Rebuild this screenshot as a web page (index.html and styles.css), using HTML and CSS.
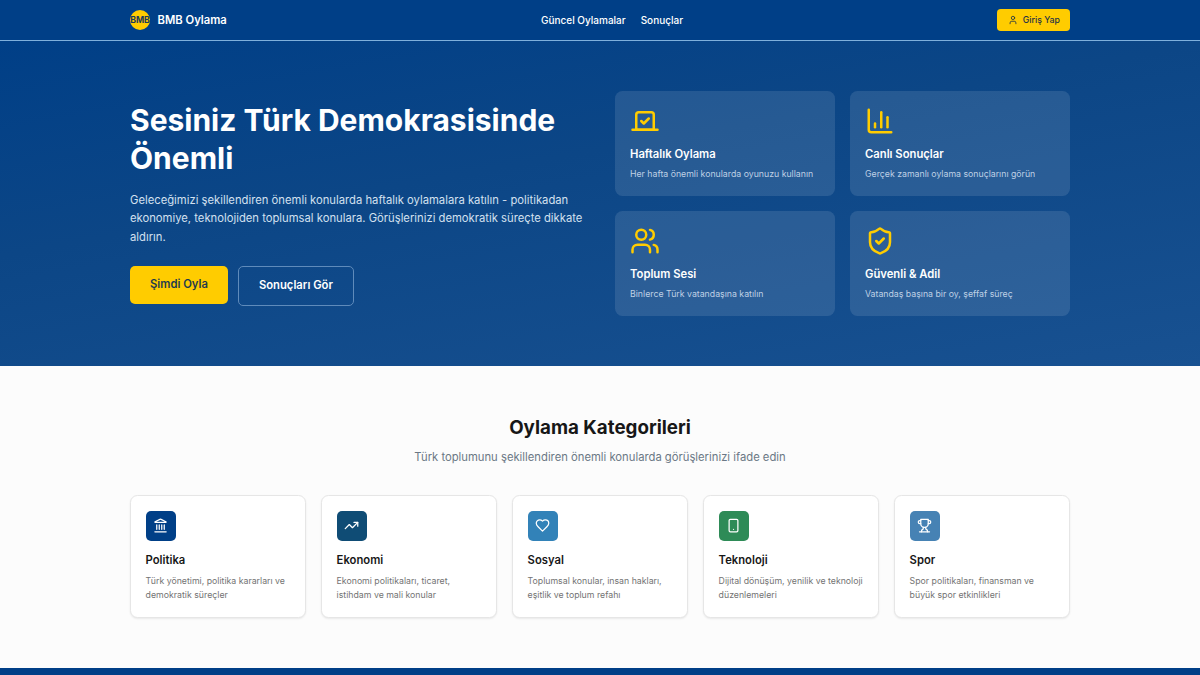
FILE: index.html
```html
<!DOCTYPE html>
<html lang="tr">

<head>
  <meta charset="UTF-8">
  <meta name="viewport" content="width=device-width, initial-scale=1.0">
  <title>BMB Oylama</title>
  <link rel="stylesheet" href="styles.css">
</head>

<body>
  <header class="header">
    <div class="container header-inner">
      <a class="logo" href="#">
        <span class="logo-mark">BMB</span>
        <span class="logo-text">BMB Oylama</span>
      </a>
      <nav class="nav">
        <a href="#">Güncel Oylamalar</a>
        <a href="#">Sonuçlar</a>
      </nav>
      <a class="login" href="#">
        <svg class="icon" viewBox="0 0 24 24">
          <path d="M19 21v-2a4 4 0 0 0-4-4H9a4 4 0 0 0-4 4v2" />
          <circle cx="12" cy="7" r="4" />
        </svg>
        Giriş Yap
      </a>
    </div>
  </header>

  <section class="hero">
    <div class="container hero-grid">
      <div class="hero-content">
        <h1>Sesiniz Türk Demokrasisinde Önemli</h1>
        <p>Geleceğimizi şekillendiren önemli konularda haftalık oylamalara katılın - politikadan ekonomiye, teknolojiden toplumsal konulara. Görüşlerinizi demokratik süreçte dikkate aldırın.</p>
        <div class="buttons">
          <a class="btn btn-primary" href="#">Şimdi Oyla</a>
          <a class="btn btn-outline" href="#">Sonuçları Gör</a>
        </div>
      </div>

      <div class="features">
        <div class="feature">
          <svg class="icon" viewBox="0 0 24 24">
            <path d="m9 12 2 2 4-4" />
            <path d="M5 7c0-1.1.9-2 2-2h10a2 2 0 0 1 2 2v12H5V7Z" />
            <path d="M22 19H2" />
          </svg>
          <h3>Haftalık Oylama</h3>
          <p>Her hafta önemli konularda oyunuzu kullanın</p>
        </div>
        <div class="feature">
          <svg class="icon" viewBox="0 0 24 24">
            <path d="M3 3v16a2 2 0 0 0 2 2h16" />
            <path d="M18 17V9" />
            <path d="M13 17V5" />
            <path d="M8 17v-3" />
          </svg>
          <h3>Canlı Sonuçlar</h3>
          <p>Gerçek zamanlı oylama sonuçlarını görün</p>
        </div>
        <div class="feature">
          <svg class="icon" viewBox="0 0 24 24">
            <path d="M16 21v-2a4 4 0 0 0-4-4H6a4 4 0 0 0-4 4v2" />
            <circle cx="9" cy="7" r="4" />
            <path d="M22 21v-2a4 4 0 0 0-3-3.87" />
            <path d="M16 3.13a4 4 0 0 1 0 7.75" />
          </svg>
          <h3>Toplum Sesi</h3>
          <p>Binlerce Türk vatandaşına katılın</p>
        </div>
        <div class="feature">
          <svg class="icon" viewBox="0 0 24 24">
            <path d="M20 13c0 5-3.5 7.5-7.66 8.95a1 1 0 0 1-.67-.01C7.5 20.5 4 18 4 13V6a1 1 0 0 1 1-1c2 0 4.5-1.2 6.24-2.72a1.17 1.17 0 0 1 1.52 0C14.51 3.81 17 5 19 5a1 1 0 0 1 1 1z" />
            <path d="m9 12 2 2 4-4" />
          </svg>
          <h3>Güvenli &amp; Adil</h3>
          <p>Vatandaş başına bir oy, şeffaf süreç</p>
        </div>
      </div>
    </div>
  </section>

  <section class="categories">
    <div class="container">
      <div class="section-title">
        <h2>Oylama Kategorileri</h2>
        <p>Türk toplumunu şekillendiren önemli konularda görüşlerinizi ifade edin</p>
      </div>

      <div class="category-grid">
        <div class="category">
          <div class="category-icon politics">
            <svg class="icon" viewBox="0 0 24 24">
              <path d="M10 18v-7" />
              <path d="M11.12 2.198a2 2 0 0 1 1.76.006l7.866 3.847c.476.233.31.949-.22.949H3.474c-.53 0-.695-.716-.22-.949z" />
              <path d="M14 18v-7" />
              <path d="M18 18v-7" />
              <path d="M3 22h18" />
              <path d="M6 18v-7" />
            </svg>
          </div>
          <h3>Politika</h3>
          <p>Türk yönetimi, politika kararları ve demokratik süreçler</p>
        </div>
        <div class="category">
          <div class="category-icon economy">
            <svg class="icon" viewBox="0 0 24 24">
              <path d="M22 7 13.5 15.5 8.5 10.5 2 17" />
              <path d="M16 7h6v6" />
            </svg>
          </div>
          <h3>Ekonomi</h3>
          <p>Ekonomi politikaları, ticaret, istihdam ve mali konular</p>
        </div>
        <div class="category">
          <div class="category-icon social">
            <svg class="icon" viewBox="0 0 24 24">
              <path d="M19 14c1.49-1.46 3-3.21 3-5.5A5.5 5.5 0 0 0 16.5 3c-1.76 0-3 .5-4.5 2-1.5-1.5-2.74-2-4.5-2A5.5 5.5 0 0 0 2 8.5c0 2.3 1.5 4.05 3 5.5l7 7Z" />
            </svg>
          </div>
          <h3>Sosyal</h3>
          <p>Toplumsal konular, insan hakları, eşitlik ve toplum refahı</p>
        </div>
        <div class="category">
          <div class="category-icon technology">
            <svg class="icon" viewBox="0 0 24 24">
              <rect width="14" height="20" x="5" y="2" rx="2" ry="2" />
              <path d="M12 18h.01" />
            </svg>
          </div>
          <h3>Teknoloji</h3>
          <p>Dijital dönüşüm, yenilik ve teknoloji düzenlemeleri</p>
        </div>
        <div class="category">
          <div class="category-icon sports">
            <svg class="icon" viewBox="0 0 24 24">
              <path d="M6 9H4.5a2.5 2.5 0 0 1 0-5H6" />
              <path d="M18 9h1.5a2.5 2.5 0 0 0 0-5H18" />
              <path d="M4 22h16" />
              <path d="M10 14.66V17c0 .55-.47.98-.97 1.21C7.85 18.75 7 20.24 7 22" />
              <path d="M14 14.66V17c0 .55.47.98.97 1.21C16.15 18.75 17 20.24 17 22" />
              <path d="M18 2H6v7a6 6 0 0 0 12 0V2Z" />
            </svg>
          </div>
          <h3>Spor</h3>
          <p>Spor politikaları, finansman ve büyük spor etkinlikleri</p>
        </div>
      </div>
    </div>
  </section>

  <footer class="footer"></footer>
</body>

</html>
```
FILE: styles.css
```css
* {
  box-sizing: border-box;
  margin: 0;
  padding: 0;
}

html {
  font-size: 10px;
}

body {
  font-family: Inter, "Liberation Sans", sans-serif;
  font-size: 1rem;
  line-height: 1.5;
  height: 100vh;
  overflow: hidden;
  background-color: #fcfcfc;
  color: #171717;
  display: flex;
  flex-direction: column;
}

a {
  color: inherit;
  text-decoration: none;
}

.container {
  width: 96rem;
  margin: 0 auto;
  padding: 0 1rem;
}

.icon {
  display: block;
  fill: none;
  stroke: currentColor;
  stroke-width: 2;
  stroke-linecap: round;
  stroke-linejoin: round;
}

/* Header */
.header {
  height: 4.0625rem;
  flex-shrink: 0;
  background-color: #003f87;
  color: #fff;
  border-bottom: 1px solid #7fb0dc;
}

.header-inner {
  height: 4rem;
  display: flex;
  justify-content: space-between;
  align-items: center;
}

.logo {
  display: flex;
  align-items: center;
  gap: 0.75rem;
}

.logo-mark {
  width: 2rem;
  height: 2rem;
  padding-top: 0.1rem;
  border-radius: 50%;
  background-color: #fc0;
  color: #1b3a5c;
  font-size: 0.875rem;
  font-weight: 700;
  display: flex;
  align-items: center;
  justify-content: center;
}

.logo-text {
  font-size: 1.125rem;
  font-weight: 600;
}

.nav {
  display: flex;
  gap: 1.5rem;
  font-weight: 500;
}

.login {
  height: 2.25rem;
  padding: 0.1rem 1rem 0 1.05rem;
  display: flex;
  align-items: center;
  gap: 0.5rem;
  border-radius: 0.375rem;
  background-color: #fc0;
  color: #1f3347;
  font-size: 0.875rem;
  font-weight: 500;
}

.login .icon {
  width: 1rem;
  height: 1rem;
  margin-bottom: 0.1rem;
}

/* Hero */
.hero {
  flex-shrink: 0;
  padding: 5rem 0;
  background: linear-gradient(170deg, #003f87 0%, #0c4686 40%, #185191 100%);
  color: #fff;
}

.hero-grid {
  display: grid;
  grid-template-columns: 1fr 1fr;
  gap: 3rem;
  align-items: center;
}

.hero-content h1 {
  font-size: 3rem;
  font-weight: 700;
  line-height: 3.8rem;
  margin-bottom: 1.45rem;
}

.hero-content p {
  font-size: 1.125rem;
  line-height: 1.625;
  margin-bottom: 2rem;
  color: #d3e0ef;
}

.buttons {
  display: flex;
  align-items: flex-start;
  gap: 1rem;
}

.btn {
  padding: 1rem 2rem;
  border-radius: 0.5rem;
  font-size: 1.125rem;
  font-weight: 600;
  line-height: 1.75rem;
}

.btn-primary {
  background-color: #fc0;
  color: #1f3b4d;
}

.btn-outline {
  border: 1px solid #5f8bbb;
}

.features {
  display: grid;
  grid-template-columns: 1fr 1fr;
  gap: 1.5rem;
}

.feature {
  padding: 1.5rem;
  border-radius: 0.75rem;
  background-color: rgba(255, 255, 255, 0.11);
}

.feature .icon {
  width: 3rem;
  height: 3rem;
  margin-bottom: 1rem;
  color: #fc0;
}

.feature h3 {
  font-size: 1.125rem;
  font-weight: 600;
  line-height: 1.75rem;
  margin-bottom: 0.5rem;
}

.feature p {
  font-size: 0.875rem;
  line-height: 1.25rem;
  color: #bfd0e5;
}

/* Categories */
.categories {
  flex-shrink: 0;
  padding: 5.13rem 0 5.05rem;
}

.section-title {
  text-align: center;
  margin-bottom: 2.86rem;
}

.section-title h2 {
  font-size: 1.875rem;
  font-weight: 700;
  line-height: 2.25rem;
  margin-bottom: 0.95rem;
}

.section-title p {
  font-size: 1.125rem;
  line-height: 1.75rem;
  color: #6b7885;
}

.category-grid {
  display: grid;
  grid-template-columns: repeat(5, 1fr);
  gap: 1.5rem;
}

.category {
  padding: 1.46rem;
  border: 1px solid #e6e6e6;
  border-radius: 0.75rem;
  background-color: #fff;
  box-shadow: 0 1px 2px rgba(0, 0, 0, 0.08);
}

.category-icon {
  width: 3rem;
  height: 3rem;
  margin-bottom: 1.12rem;
  border-radius: 0.5rem;
  color: #fff;
  display: flex;
  align-items: center;
  justify-content: center;
}

.category-icon .icon {
  width: 1.5rem;
  height: 1.5rem;
}

.politics {
  background-color: #003f87;
}

.economy {
  background-color: #0f4c75;
}

.social {
  background-color: #3282b8;
}

.technology {
  background-color: #2e8b57;
}

.sports {
  background-color: #4682b4;
}

.category h3 {
  font-size: 1.125rem;
  font-weight: 600;
  line-height: 1.75rem;
  margin-bottom: 0.44rem;
}

.category p {
  font-size: 0.875rem;
  line-height: 1.625;
  color: #737373;
}

.footer {
  flex: 1;
  background-color: #003f87;
}
```
